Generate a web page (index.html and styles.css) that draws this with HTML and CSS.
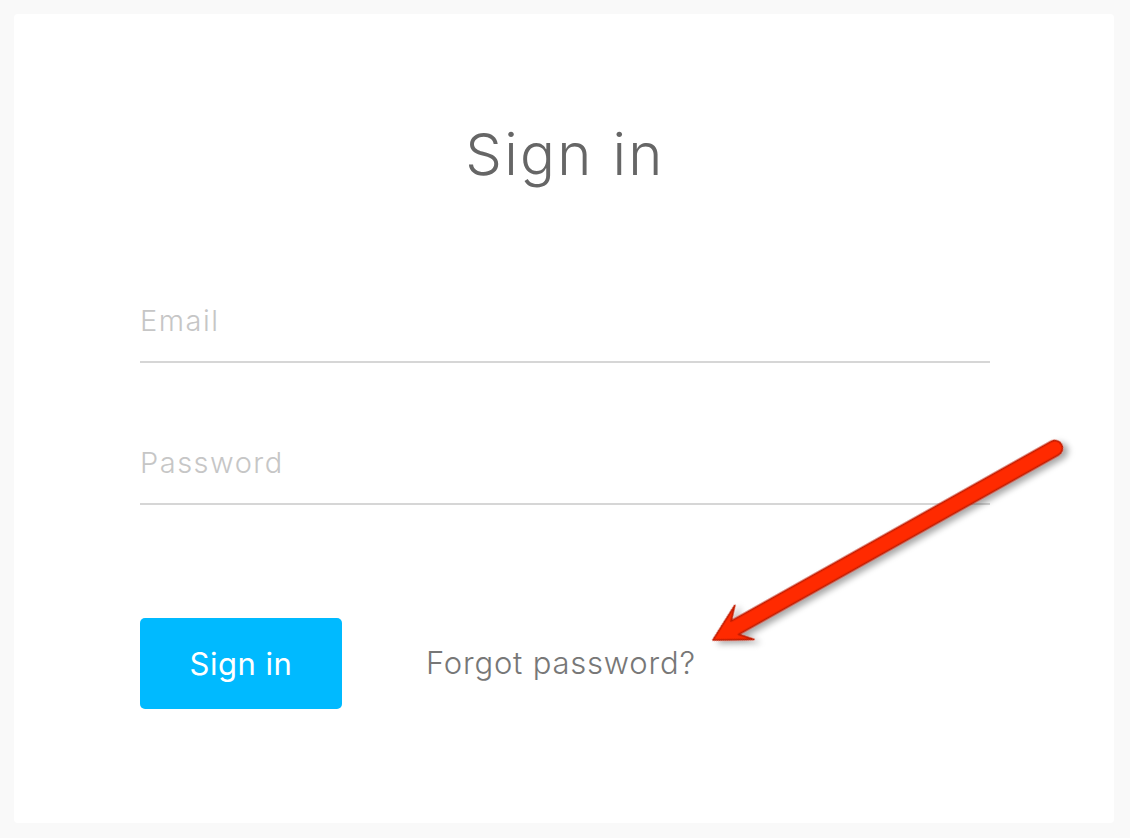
FILE: index.html
```html
<!DOCTYPE html>
<html lang="en">
<head>
<meta charset="utf-8">
<title>Sign in</title>
<link rel="stylesheet" href="styles.css">
</head>
<body>
<main class="card">
  <h1 class="title">Sign in</h1>
  <form class="form">
    <div class="field"><input class="input" type="email" placeholder="Email"></div>
    <div class="field field-second"><input class="input" type="password" placeholder="Password"></div>
    <div class="actions">
      <button class="btn" type="button">Sign in</button>
      <a class="forgot" href="#">Forgot password?</a>
    </div>
  </form>
  <svg class="arrow" viewBox="14 14 1100 809" width="1100" height="809" xmlns="http://www.w3.org/2000/svg">
    <defs>
      <filter id="shadow" x="-10%" y="-30%" width="130%" height="170%">
        <feDropShadow dx="3" dy="5" stdDeviation="3" flood-color="#000" flood-opacity="0.35"/>
      </filter>
    </defs>
    <g transform="translate(713 640) rotate(-29.3)" filter="url(#shadow)">
      <path d="M0,0 L36,-19.5 Q30,-13 25,-7.6 L392,-7.6 A7.6,7.6 0 0 1 392,7.6 L25,7.6 Q30,13 36,19.5 Z" fill="#ff2a00" stroke="#c21b00" stroke-width="1.6" stroke-linejoin="round"/>
    </g>
  </svg>
</main>
</body>
</html>
```

FILE: styles.css
```css
* { box-sizing: border-box; }

html, body {
  margin: 0;
  padding: 0;
}

body {
  background: #f9f9f9;
  padding: 14px 16px 15px 14px;
  font-family: "Inter", "Lato", sans-serif;
}

.card {
  position: relative;
  width: 1100px;
  height: 809px;
  background: #ffffff;
  border-radius: 4px;
  padding: 105px 124px 0 126px;
}

.title {
  margin: 0;
  text-align: center;
  font-family: "Inter", sans-serif;
  font-weight: 300;
  font-size: 58px;
  line-height: 70px;
  color: #666666;
  letter-spacing: 2.3px;
}

.form {
  margin-top: 112px;
  display: flex;
  flex-direction: column;
}

.field {
  border-bottom: 2px solid #d6d6d6;
  padding-bottom: 20px;
}

.field-second {
  margin-top: 80px;
}

.input {
  display: block;
  width: 100%;
  border: 0;
  outline: none;
  padding: 0;
  margin: 0;
  background: transparent;
  font-family: "Inter", sans-serif;
  font-weight: 300;
  font-size: 29px;
  line-height: 40px;
  height: 40px;
  letter-spacing: 1.5px;
  color: #555;
}

.input::placeholder {
  color: #c6c6c6;
  opacity: 1;
}

.actions {
  margin-top: 113px;
  display: flex;
  align-items: center;
  gap: 84px;
}

.btn {
  width: 202px;
  height: 91px;
  border: 0;
  border-radius: 5px;
  background: #00baff;
  color: #ffffff;
  font-family: "Inter", sans-serif;
  font-weight: 400;
  font-size: 31px;
  letter-spacing: 0.5px;
  padding: 0;
}

.forgot {
  font-family: "Inter", sans-serif;
  font-weight: 300;
  font-size: 31px;
  letter-spacing: 0.8px;
  color: #777777;
  text-decoration: none;
  margin-top: -3px;
}

.arrow {
  position: absolute;
  left: 0;
  top: 0;
  pointer-events: none;
  overflow: visible;
}
```
